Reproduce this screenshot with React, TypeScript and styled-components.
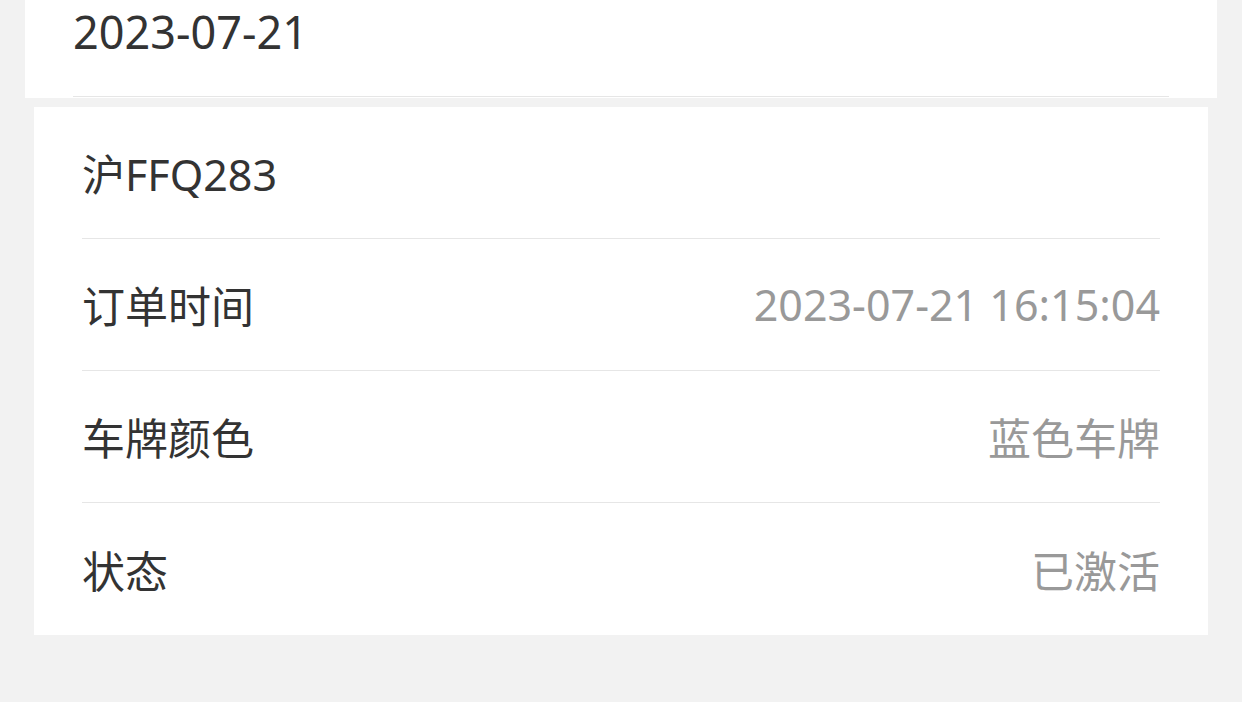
import React from 'react'
import styled, { createGlobalStyle } from 'styled-components'

const GlobalStyle = createGlobalStyle`
  html, body {
    margin: 0;
    padding: 0;
    background: #f2f2f2;
  }
  body {
    font-family: "Noto Sans", "Noto Sans CJK SC", sans-serif;
    -webkit-font-smoothing: antialiased;
  }
`

const Page = styled.div`
  width: 1242px;
  height: 702px;
  overflow: hidden;
  background: #f2f2f2;
`

const DateCard = styled.div`
  margin: 0 25px;
  height: 98px;
  padding: 0 48px;
  background: #ffffff;
  box-sizing: border-box;
`

const DateLine = styled.div`
  height: 97px;
  box-sizing: border-box;
  padding-top: 9px;
  border-bottom: 1px solid #e6e6e6;
  font-size: 45px;
  line-height: 45px;
  color: #333333;
`

const InfoCard = styled.div`
  margin: 9px 34px 0;
  padding: 0 48px;
  background: #ffffff;
`

const Row = styled.div`
  display: flex;
  align-items: center;
  justify-content: space-between;
  height: 132px;
  box-sizing: border-box;
  border-bottom: 1px solid #e6e6e6;

  &:last-child {
    border-bottom: none;
  }
`

const Label = styled.span`
  font-size: 43px;
  color: #333333;
`

const Value = styled.span`
  font-size: 43px;
  color: #999999;
`

const rows = [
  { label: '订单时间', value: '2023-07-21 16:15:04' },
  { label: '车牌颜色', value: '蓝色车牌' },
  { label: '状态', value: '已激活' },
]

export default function App() {
  return (
    <Page>
      <GlobalStyle />
      <DateCard>
        <DateLine>2023-07-21</DateLine>
      </DateCard>
      <InfoCard>
        <Row>
          <Label>沪FFQ283</Label>
        </Row>
        {rows.map((r) => (
          <Row key={r.label}>
            <Label>{r.label}</Label>
            <Value>{r.value}</Value>
          </Row>
        ))}
      </InfoCard>
    </Page>
  )
}
